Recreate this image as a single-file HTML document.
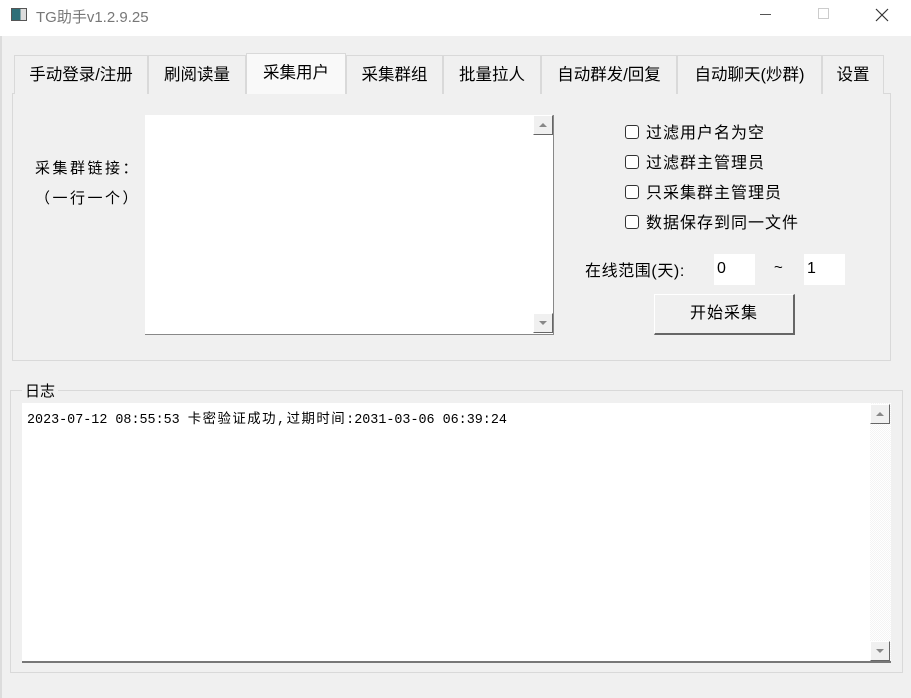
<!DOCTYPE html><html><head><meta charset="utf-8"><style>
*{box-sizing:border-box;margin:0;padding:0}
body{width:911px;height:698px;background:#f0f0f0;position:relative;overflow:hidden;font-family:"Liberation Sans","Noto Sans CJK SC",sans-serif;font-size:15px;color:#000}
.a{position:absolute}
.tab{position:absolute;top:55px;height:39px;border:1px solid #d9d9d9;border-bottom:none;background:#f0f0f0;text-align:center;line-height:38px;font-size:16.5px}
.cb{position:absolute;left:625px;width:14px;height:14px;border:1px solid #333;border-radius:3px;background:#fff}
.cl{position:absolute;left:646px;font-size:16px;letter-spacing:1px}
.sb{position:absolute;width:20px;height:20px;background:#f0f0f0;border-right:1px solid #666;border-bottom:1px solid #666;border-top:1px solid #fff;border-left:1px solid #fff}
.up:after,.dn:after{content:"";position:absolute;left:5px;border-left:4px solid transparent;border-right:4px solid transparent}
.up:after{top:7px;border-bottom:4px solid #888}
.dn:after{top:7px;border-top:4px solid #888}
</style></head><body>
<div class="a" style="left:0;top:0;width:911px;height:36px;background:#fff"></div>
<div class="a" style="left:11px;top:8px;width:16px;height:13px;border:1px solid #555;background:linear-gradient(90deg,#2f6f78 60%,#ddd 60%)"></div>
<div class="a" style="left:36px;top:6px;font-size:15px;color:#777">TG助手v1.2.9.25</div>
<div class="a" style="left:760px;top:14px;width:11px;border-top:1px solid #555"></div>
<div class="a" style="left:818px;top:8px;width:11px;height:11px;border:1px solid #ccc"></div>
<svg class="a" style="left:875px;top:8px" width="14" height="14"><path d="M1 1L13 13M13 1L1 13" stroke="#333" stroke-width="1.2"/></svg>
<div class="a" style="left:0;top:36px;width:2px;height:662px;background:#dcdcdc"></div>

<div class="a" style="left:12px;top:93px;width:879px;height:268px;border:1px solid #d9d9d9;background:#f0f0f0"></div>
<div class="tab" style="left:14px;width:134px">手动登录/注册</div>
<div class="tab" style="left:148px;width:98px">刷阅读量</div>
<div class="tab" style="left:246px;top:53px;height:41px;width:100px;background:#f9f9f9">采集用户</div>
<div class="tab" style="left:346px;width:97px">采集群组</div>
<div class="tab" style="left:443px;width:98px">批量拉人</div>
<div class="tab" style="left:541px;width:136px">自动群发/回复</div>
<div class="tab" style="left:677px;width:145px">自动聊天(炒群)</div>
<div class="tab" style="left:822px;width:62px">设置</div>

<div class="a" style="left:35px;top:157px;font-size:15px;letter-spacing:2.5px">采集群链接：</div>
<div class="a" style="left:35px;top:187px;font-size:15px;letter-spacing:2.5px">（一行一个）</div>
<div class="a" style="left:145px;top:115px;width:409px;height:220px;background:#fff;border-bottom:1px solid #888;border-right:1px solid #888"></div>
<div class="sb up" style="left:533px;top:115px"></div>
<div class="sb dn" style="left:533px;top:313px"></div>

<div class="cb" style="top:125px"></div><div class="cl" style="top:119px">过滤用户名为空</div>
<div class="cb" style="top:155px"></div><div class="cl" style="top:149px">过滤群主管理员</div>
<div class="cb" style="top:185px"></div><div class="cl" style="top:179px">只采集群主管理员</div>
<div class="cb" style="top:215px"></div><div class="cl" style="top:209px">数据保存到同一文件</div>
<div class="a" style="left:585px;top:257px;font-size:16px;letter-spacing:0.6px">在线范围(天):</div>
<div class="a" style="left:714px;top:254px;width:41px;height:31px;background:#fff;padding:6px 0 0 3px;font-size:16px">0</div>
<div class="a" style="left:774px;top:259px;font-size:15px">~</div>
<div class="a" style="left:804px;top:254px;width:41px;height:31px;background:#fff;padding:6px 0 0 3px;font-size:16px">1</div>
<div class="a" style="left:654px;top:294px;width:141px;height:41px;background:#f0f0f0;border:1px solid #fff;border-right:2px solid #666;border-bottom:2px solid #666;text-align:center;line-height:37px;font-size:16px;letter-spacing:1px">开始采集</div>

<div class="a" style="left:10px;top:390px;width:893px;height:283px;border:1px solid #d9d9d9"></div>
<div class="a" style="left:22px;top:380px;background:#f0f0f0;padding:0 3px;font-size:15px">日志</div>
<div class="a" style="left:22px;top:403px;width:869px;height:260px;background:#fff;border-bottom:2px solid #777"></div>
<div class="a" style="left:870px;top:403px;width:21px;height:258px;background:repeating-conic-gradient(#f4f4f4 0 25%,#fff 0 50%) 0 0/2px 2px"></div>
<div class="sb up" style="left:870px;top:404px"></div>
<div class="sb dn" style="left:870px;top:641px"></div>
<div class="a" style="left:27px;top:407px;font-family:'Liberation Mono','Noto Sans CJK SC',monospace;font-size:13.4px">2023-07-12 08:55:53 <span style="letter-spacing:1.5px">卡密验证成功,过期时间</span>:2031-03-06 06:39:24</div>
</body></html>
